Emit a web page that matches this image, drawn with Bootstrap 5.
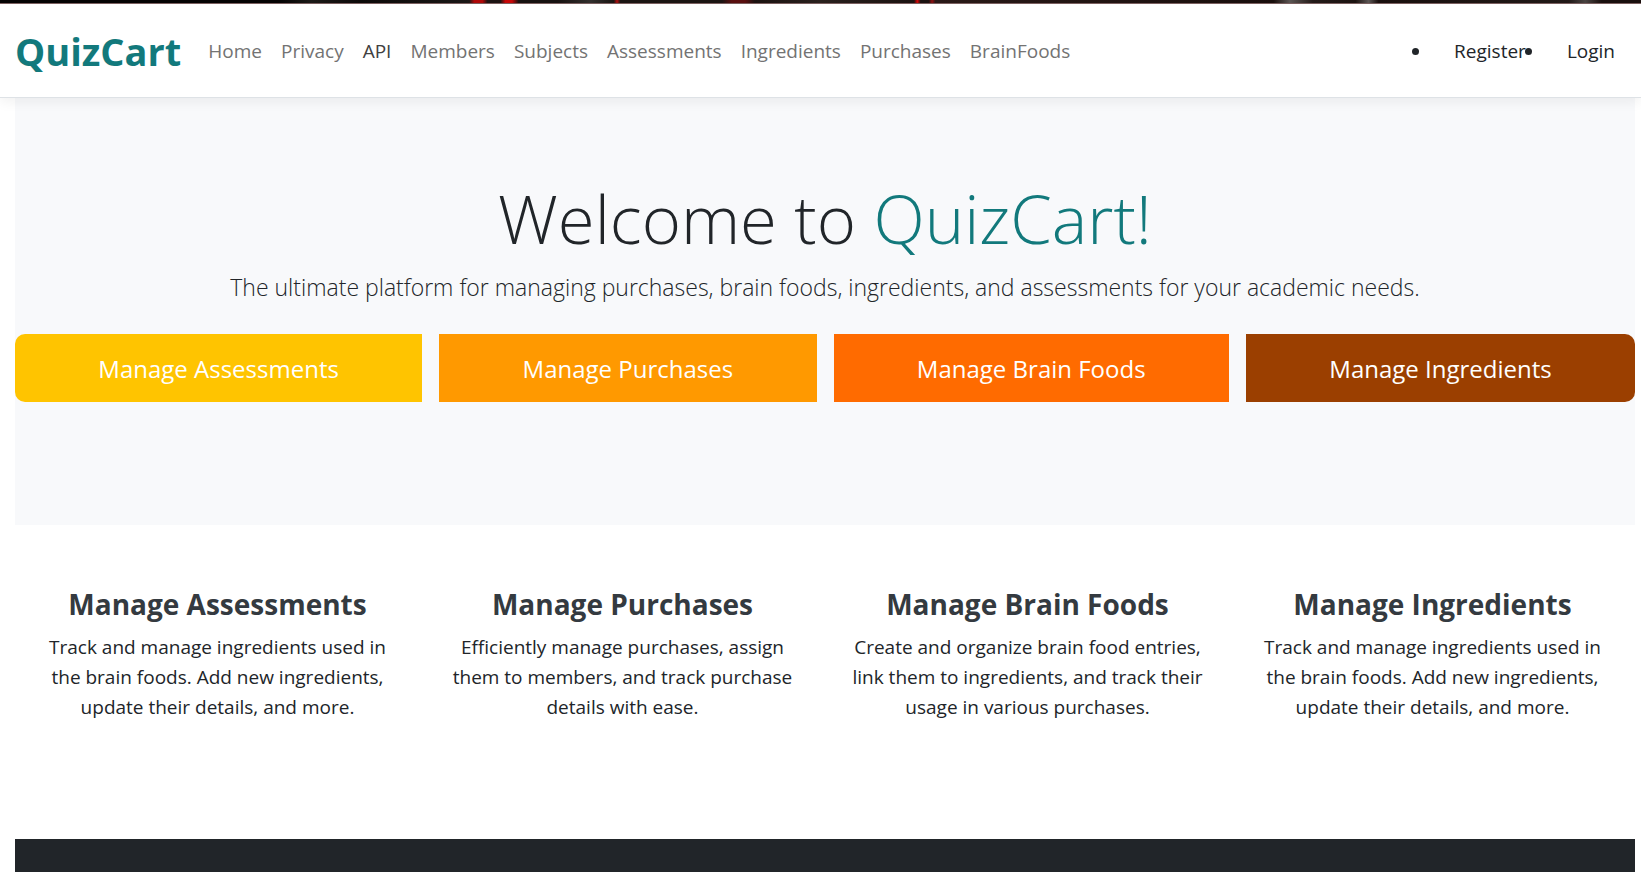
<!DOCTYPE html>
<html lang="en">
<head>
<meta charset="utf-8">
<meta name="viewport" content="width=device-width, initial-scale=1">
<title>QuizCart</title>
<link href="https://cdn.jsdelivr.net/npm/bootstrap@5.3.0/dist/css/bootstrap.min.css" rel="stylesheet">
<style>
  body { font-family: "Open Sans", "Noto Sans", sans-serif; font-size: 19px; line-height: 30px; color: #212529; }
  .top-strip { height: 4px; border-bottom: 1px solid #7d6262;
    background: linear-gradient(90deg, #050403 17%, #1d1a18 19%, #0d0a09 22%, #1b1817 28.6%, #b00808 28.9% 29.4%, #1d1413 29.7% 30.5%, #c80808 30.8% 31.2%, #181211 31.6% 34%, #33302e 36%, #1a1513 37.4%, #b01010 37.6%, #1c1513 37.8% 44%, #5a1010 44.6% 45.4%, #1c1311 46%, #2a211e 50%, #1c1311 55.7%, #d80808 55.9%, #1c1311 56.1% 56.6%, #901010 56.8%, #2a1a18 57%, #1a0f0d 77.6%, #5c5654 78.6%, #241b19 80%, #1c1311 82.6%, #5c5654 83.4%, #1a100e 84%, #221a18 95.6%, #4a4442 96.6%, #1a100e 97.6%); }
  .site-nav { min-height: 94px; padding: 0 6px 0 15px; border-bottom: 1px solid #dee2e6; box-shadow: 0 4px 12px rgba(0,0,0,.06); z-index: 1; --bs-navbar-nav-link-padding-x: 9px; }
  .site-nav .navbar-brand { color: #12797c; font-size: 38px; line-height: 56px; font-weight: 700; margin-right: 18px; }
  .site-nav .navbar-nav { gap: 1px; }
  .site-nav .nav-link { color: #737373; }
  .site-nav .nav-link.active { color: #404040; }
  .account-list { margin: 0; padding: 0 20px 0 0; gap: 19px; }
  .account-list li { padding-left: 22px; }
  .account-list a { color: #212529; text-decoration: none; }
  .page-body { padding: 0 6px 0 15px; }
  .hero { background: #f8f9fb; padding: 72px 0 123px; text-align: center; }
  .hero h1 { font-size: 67px; line-height: 96px; font-weight: 300; margin: 0 0 3px; }
  .hero h1 span { color: #12797c; }
  .hero .intro { font-size: 23px; line-height: 36px; font-weight: 300; margin: 0 0 29px; }
  .actions { gap: 17px; }
  .actions .btn { border: 0; border-radius: 0; color: #fff; font-size: 24px; line-height: 36px; padding: 17px 16px 15px; }
  .actions .btn:first-child { border-radius: 10px 0 0 10px; }
  .actions .btn:last-child { border-radius: 0 10px 10px 0; }
  .amber { background: #ffc400; } .orange { background: #ff9900; }
  .blaze { background: #ff6b00; } .rust { background: #9b3f00; }
  .features { padding: 59px 0 117px; text-align: center; }
  .features .col { padding: 0 26px; }
  .features h2 { color: #343a40; font-size: 28px; line-height: 40px; font-weight: 700; margin: 0 0 8px; }
  .features p { margin: 0; }
  .site-footer { background: #212529; min-height: 30px; }
</style>
</head>
<body class="d-flex flex-column min-vh-100">
<div class="top-strip"></div>
<header>
  <nav class="navbar navbar-expand site-nav bg-white">
    <a class="navbar-brand p-0" href="#">QuizCart</a>
    <ul class="navbar-nav me-auto">
      <li class="nav-item"><a class="nav-link" href="#">Home</a></li>
      <li class="nav-item"><a class="nav-link" href="#">Privacy</a></li>
      <li class="nav-item"><a class="nav-link active" href="#">API</a></li>
      <li class="nav-item"><a class="nav-link" href="#">Members</a></li>
      <li class="nav-item"><a class="nav-link" href="#">Subjects</a></li>
      <li class="nav-item"><a class="nav-link" href="#">Assessments</a></li>
      <li class="nav-item"><a class="nav-link" href="#">Ingredients</a></li>
      <li class="nav-item"><a class="nav-link" href="#">Purchases</a></li>
      <li class="nav-item"><a class="nav-link" href="#">BrainFoods</a></li>
    </ul>
    <ul class="account-list d-flex">
      <li><a href="#">Register</a></li>
      <li><a href="#">Login</a></li>
    </ul>
  </nav>
</header>
<div class="page-body d-flex flex-column flex-grow-1">
  <main>
    <section class="hero">
      <h1>Welcome to <span>QuizCart!</span></h1>
      <p class="intro">The ultimate platform for managing purchases, brain foods, ingredients, and assessments for your academic needs.</p>
      <div class="actions d-flex">
        <a class="btn amber flex-fill" href="#">Manage Assessments</a>
        <a class="btn orange flex-fill" href="#">Manage Purchases</a>
        <a class="btn blaze flex-fill" href="#">Manage Brain Foods</a>
        <a class="btn rust flex-fill" href="#">Manage Ingredients</a>
      </div>
    </section>
    <section class="features row g-0">
      <div class="col"><h2>Manage Assessments</h2><p>Track and manage ingredients used in the brain foods. Add new ingredients, update their details, and more.</p></div>
      <div class="col"><h2>Manage Purchases</h2><p>Efficiently manage purchases, assign them to members, and track purchase details with ease.</p></div>
      <div class="col"><h2>Manage Brain Foods</h2><p>Create and organize brain food entries, link them to ingredients, and track their usage in various purchases.</p></div>
      <div class="col"><h2>Manage Ingredients</h2><p>Track and manage ingredients used in the brain foods. Add new ingredients, update their details, and more.</p></div>
    </section>
  </main>
  <footer class="site-footer flex-grow-1"></footer>
</div>
<script src="https://cdn.jsdelivr.net/npm/bootstrap@5.3.0/dist/js/bootstrap.bundle.min.js"></script>
</body>
</html>
